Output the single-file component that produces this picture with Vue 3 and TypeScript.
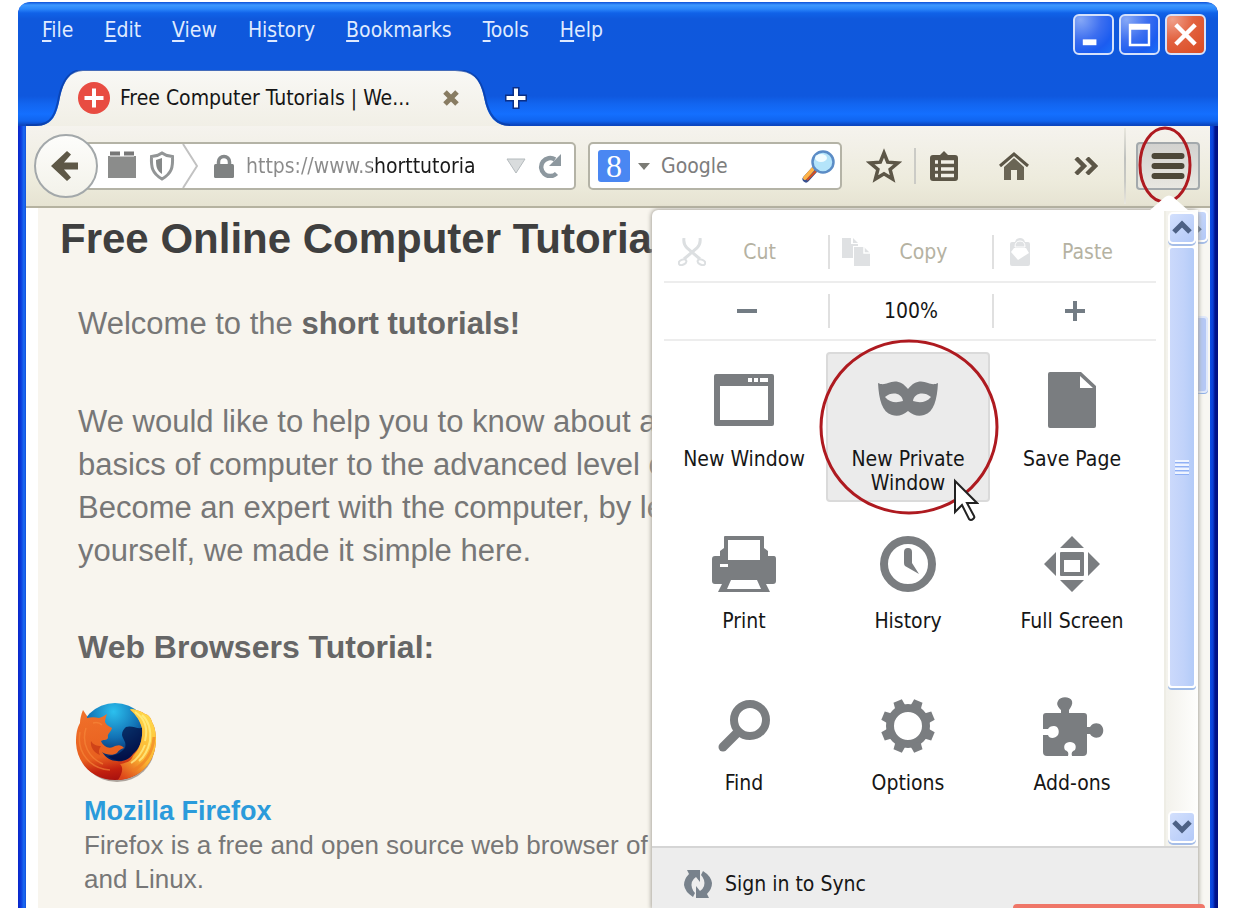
<script setup lang="ts">
import { ref } from 'vue'

interface MenuEntry {
  before: string
  key: string
  after: string
}

const menus: MenuEntry[] = [
  { before: '', key: 'F', after: 'ile' },
  { before: '', key: 'E', after: 'dit' },
  { before: '', key: 'V', after: 'iew' },
  { before: 'Hi', key: 's', after: 'tory' },
  { before: '', key: 'B', after: 'ookmarks' },
  { before: '', key: 'T', after: 'ools' },
  { before: '', key: 'H', after: 'elp' },
]

const teeth: number[] = [22.5, 67.5, 112.5, 157.5, 202.5, 247.5, 292.5, 337.5]

const address = ref('https://www.shorttutoria')
const query = ref('')
</script>

<template>
  <div class="window">
    <header class="titlebar">
      <div class="menu-row">
        <nav class="menus">
          <button v-for="m in menus" :key="m.key + m.after" class="menu" type="button">{{ m.before }}<u>{{ m.key }}</u>{{ m.after }}</button>
        </nav>
        <div class="controls">
          <button class="control" type="button" aria-label="Minimize">
            <svg viewBox="0 0 38 38"><rect x="8" y="24" width="14" height="6" fill="#fff" /></svg>
          </button>
          <button class="control" type="button" aria-label="Maximize">
            <svg viewBox="0 0 38 38"><path d="M8 8h22v23H8zM10.500 14v14.500h17V14z" fill="#fff" fill-rule="evenodd" /></svg>
          </button>
          <button class="control close" type="button" aria-label="Close">
            <svg viewBox="0 0 38 38"><path d="M9 9l20 20M29 9L9 29" stroke="#fff" stroke-width="4.500" /></svg>
          </button>
        </div>
      </div>
      <div class="tab-row">
        <div class="tab">
          <svg class="tab-shape" viewBox="0 0 484 56" preserveAspectRatio="none">
            <defs>
              <linearGradient id="tabFill" x1="0" y1="0" x2="0" y2="1">
                <stop offset="0" stop-color="#f9f8f5" />
                <stop offset="1" stop-color="#f1efe6" />
              </linearGradient>
            </defs>
            <path d="M0 56H10C27 56 31 44 34 27C38 8 46 0 58 0H428C446 0 454 8 458 27C461 44 468 56 484 56Z" fill="url(#tabFill)" />
            <path d="M0 55H10C26 55 30 43 33 27C37 8 45 0 57 0H429C447 0 455 8 459 27C462 43 469 55 484 55" fill="none" stroke="#0a3da6" stroke-width="2" opacity=".75" />
          </svg>
          <svg class="favicon" viewBox="0 0 32 32">
            <circle cx="16" cy="16" r="16" fill="#e84c42" />
            <path d="M16 6.500v19M6.500 16h19" stroke="#fff" stroke-width="4" />
          </svg>
          <span class="tab-title">Free Computer Tutorials | We...</span>
          <button class="plain" type="button" aria-label="Close tab">
            <svg width="18" height="18" viewBox="0 0 18 18"><path d="M3 3l12 12M15 3L3 15" stroke="#887c62" stroke-width="5" /></svg>
          </button>
        </div>
        <button class="plain new-tab" type="button" aria-label="New tab">
          <svg width="26" height="26" viewBox="0 0 26 26">
            <path d="M13 2v22M2 13h22" stroke="#0b2f86" stroke-width="7" />
            <path d="M13 3.500v19M3.500 13h19" stroke="#fff" stroke-width="4" />
          </svg>
        </button>
      </div>
    </header>

    <div class="toolbar">
      <button class="back" type="button" aria-label="Back">
        <svg width="30" height="32" viewBox="0 0 30 32"><path d="M17 1l4 3.500-7 8h14v7H14l7 8-4 3.500L1 16z" fill="#5e5847" /></svg>
      </button>
      <div class="address">
        <svg class="ident" width="92" height="44" viewBox="0 0 92 44">
          <path d="M2 12h28v22H2z" fill="#8b8c8b" />
          <path d="M4 9.500h10M18 9.500h10" stroke="#777" stroke-width="4" />
          <path d="M4 12.500h24" stroke="#fff" stroke-width="1" opacity=".5" />
          <path d="M56 9c4 3 7 3 10.500 3.500C67 23 66 29 56 35C46 29 45 23 45.500 12.500C49 12 52 12 56 9z" fill="none" stroke="#929596" stroke-width="3" />
          <path d="M56 14v16c-5-3-6-7-6-14z" fill="#858888" />
          <path d="M77 0l14 22-14 22" fill="none" stroke="#c2c2c2" stroke-width="2" />
        </svg>
        <svg class="lock" width="20" height="24" viewBox="0 0 20 24">
          <path d="M4.500 12V8a5.500 5.500 0 0 1 11 0v4" fill="none" stroke="#85898a" stroke-width="3.500" />
          <rect y="10" width="20" height="14" rx="1.500" fill="#7f8282" />
        </svg>
        <input v-model="address" class="url" type="text" aria-label="Address" />
        <svg width="20" height="16" viewBox="0 0 20 16"><path d="M1 1h18L10 15z" fill="#d9dcdd" stroke="#b4babd" /></svg>
        <button class="plain reload" type="button" aria-label="Reload">
          <svg width="24" height="24" viewBox="0 0 24 24">
            <path d="M18.500 19.500A9 9 0 1 1 17 5.500" fill="none" stroke="#8d989f" stroke-width="4.500" />
            <path d="M23 0v12H11z" fill="#8d989f" />
          </svg>
        </button>
      </div>
      <div class="search">
        <span class="engine">8</span>
        <svg width="12" height="7" viewBox="0 0 12 7"><path d="M0 0h12L6 7z" fill="#7b7b75" /></svg>
        <input v-model="query" class="query" type="text" placeholder="Google" aria-label="Search" />
        <button class="plain" type="button" aria-label="Search now">
          <svg width="34" height="34" viewBox="0 0 34 34">
            <path d="M14 19L4 30" stroke="#38508f" stroke-width="7" stroke-linecap="round" />
            <path d="M11 20L3 29" stroke="#ffb347" stroke-width="4" stroke-linecap="round" />
            <path d="M14 22L5 31" stroke="#d8511f" stroke-width="2" />
            <circle cx="21" cy="13" r="10.500" fill="#b4e4fa" stroke="#5b8cc6" stroke-width="2.500" />
            <ellipse cx="19" cy="9" rx="6" ry="4" fill="#f1fcff" />
          </svg>
        </button>
      </div>
      <button class="plain tool star" type="button" aria-label="Bookmark">
        <svg width="36" height="36" viewBox="0 0 36 36"><path d="M18 5l3.700 9.200 10 .8-7.600 6.400 2.500 9.600-8.600-5.300L9.400 31l2.500-9.600L4.300 15l10-.8z" fill="none" stroke="#5c5647" stroke-width="3.500" /></svg>
      </button>
      <span class="tool-sep"></span>
      <button class="plain tool list" type="button" aria-label="Bookmarks list">
        <svg width="28" height="30" viewBox="0 0 28 30">
          <path d="M3 4h7l4-4 4 4h7q3 0 3 3v20q0 3-3 3H3q-3 0-3-3V7q0-3 3-3z" fill="#5c5647" />
          <path d="M5 11h3M5 18h3M5 24.500h3M11 11h13M11 18h13M11 24.500h13" stroke="#f2f0e7" stroke-width="3.500" />
        </svg>
      </button>
      <button class="plain tool" type="button" aria-label="Home">
        <svg width="30" height="28" viewBox="0 0 30 28">
          <path d="M1 14L15 2l14 12" fill="none" stroke="#5c5647" stroke-width="3" />
          <path d="M5 15l10-9 10 9v13h-7V18h-6v10H5z" fill="#6a6555" />
        </svg>
      </button>
      <button class="plain tool" type="button" aria-label="More tools">
        <svg width="24" height="18" viewBox="0 0 24 18"><path d="M2 1l8 8-8 8M13 1l8 8-8 8" fill="none" stroke="#5c5647" stroke-width="4.500" /></svg>
      </button>
      <span class="end-sep"></span>
      <button class="burger" type="button" aria-label="Open menu">
        <svg width="34" height="28" viewBox="0 0 34 28"><path d="M3.500 4h27M3.500 14h27M3.500 24h27" stroke="#4d4839" stroke-width="6" stroke-linecap="round" /></svg>
        <svg class="ring small" viewBox="0 0 54 78"><ellipse cx="27" cy="39" rx="25" ry="37" fill="none" stroke="#ae1a20" stroke-width="3" /></svg>
      </button>
    </div>

    <div class="body">
      <main class="page">
        <h1>Free Online Computer Tutoria</h1>
        <p class="lead">Welcome to the <b>short tutorials!</b></p>
        <p class="lead">We would like to help you to know about a<br />basics of computer to the advanced level o<br />Become an expert with the computer, by le<br />yourself, we made it simple here.</p>
        <h2>Web Browsers Tutorial:</h2>
        <svg class="fox" viewBox="0 0 80 80">
          <defs>
            <radialGradient id="globe" cx=".48" cy=".12" r=".72">
              <stop offset="0" stop-color="#2cc0ee" />
              <stop offset=".5" stop-color="#1272b5" />
              <stop offset="1" stop-color="#03104e" />
            </radialGradient>
            <linearGradient id="fur" x1=".3" y1="0" x2=".5" y2="1">
              <stop offset="0" stop-color="#f0702a" />
              <stop offset=".65" stop-color="#e8601f" />
              <stop offset=".85" stop-color="#c2200f" />
              <stop offset="1" stop-color="#a8110f" />
            </linearGradient>
            <linearGradient id="tail" x1=".6" y1="0" x2=".2" y2="1">
              <stop offset="0" stop-color="#ffd84a" />
              <stop offset=".6" stop-color="#fbb431" />
              <stop offset="1" stop-color="#dd451a" />
            </linearGradient>
          </defs>
          <ellipse cx="41" cy="42" rx="38" ry="37" fill="#3b2a22" opacity=".4" />
          <circle cx="39" cy="36" r="36" fill="url(#globe)" />
          <path d="M50 24c6-2 10 2 16 1c1 14-4 24-14 31c-8 3-16 1-20-3c6 0 12-2 17-8c2-6-2-8-3-13c0-4 2-6 4-8z" fill="#020a3e" opacity=".7" />
          <path d="M11 13L7 7C5 12 4 16 4 20C1 25 0 31 0 40C1 61 17 77 39 77C62 77 79 61 80 38C80 30 79 24 76 19C75 15 73 12 69 11C65 8 59 6 54 7C58 10 63 14 66 25C67 36 64 46 57 51C53 57 46 59 41 58C35 58 30 55 26 49C30 52 37 53 41 50C43 47 45 46 48 45C45 41 41 42 37 44C32 46 27 43 25 38C28 36 32 38 32 34C31 31 35 29 36 25C33 23 30 22 29 19C29 16 30 14 31 11C28 13 26 14 23 15C19 14 15 14 11 15Z" fill="url(#fur)" />
          <path d="M54 6C57 10 63 14 66 25C67 36 64 46 57 53C55 59 49 60 44 61C48 65 46 71 42 77C63 76 79 61 80 38C80 30 79 24 76 19C75 15 73 12 69 11C65 8 59 6 54 6Z" fill="url(#tail)" />
          <path d="M66 12c8 7 9 17 8 26c-2 9-6 16-11 20M59 9c11 7 13 17 10 29M69 42c-4 10-9 15-14 18" fill="none" stroke="#fff08a" stroke-width="2" opacity=".75" />
          <path d="M78 34c-1 16-10 28-22 34" fill="none" stroke="#ef7a22" stroke-width="3" opacity=".6" />
          <path d="M15 38c2 4 6 5 10 5c-2 3-3 6-1 9c-6-2-10-8-9-14z" fill="#bd2d12" opacity=".6" />
          <path d="M4 29c-4 22 12 37 30 38M10 25c-5 16 3 30 17 36M17 20c4-1 7 0 9 2" fill="none" stroke="#f78b3c" stroke-width="1.500" opacity=".6" />
        </svg>
        <div class="entry">
          <a href="#">Mozilla Firefox</a>
          <p>Firefox is a free and open source web browser of<br />and Linux.</p>
        </div>
      </main>
      <div class="page-scroll">
        <span class="scroll-btn">
          <svg width="24" height="16" viewBox="0 0 24 16"><path d="M3 13l9-9 9 9" fill="none" stroke="#4d6185" stroke-width="5" /></svg>
        </span>
        <span class="page-thumb"></span>
      </div>

      <section class="popup">
        <svg class="arrow" viewBox="0 0 40 16"><path d="M0 16L16 2q4-3 8 0l16 14z" fill="#fff" /></svg>
        <div class="popup-main">
          <div class="grid">
            <div class="row edit">
              <button class="cell" type="button">
                <svg width="28" height="28" viewBox="0 0 28 28">
                  <path d="M6 0q-1 6 3 10l13 11M22 0q1 6-3 10L6 21" fill="none" stroke="#dcdfe1" stroke-width="3" />
                  <ellipse cx="4.500" cy="24" rx="4" ry="2.500" fill="none" stroke="#dcdfe1" stroke-width="2" transform="rotate(-25 5 24)" />
                  <ellipse cx="23.500" cy="24" rx="4" ry="2.500" fill="none" stroke="#dcdfe1" stroke-width="2" transform="rotate(25 23 24)" />
                </svg>
                <span>Cut</span>
              </button>
              <button class="cell" type="button">
                <svg width="28" height="28" viewBox="0 0 28 28">
                  <path d="M0 0h9v6h7v2h-5v12H0zM11 0l5 5h-5z" fill="#dfe1e3" />
                  <path d="M12 9h10l6 6v13H12z" fill="#dfe1e3" />
                  <path d="M22 9v6h6" fill="none" stroke="#fff" stroke-width="1.500" />
                </svg>
                <span>Copy</span>
              </button>
              <button class="cell" type="button">
                <svg width="28" height="28" viewBox="0 0 28 28">
                  <path d="M6 4h3q1-4 5-4t5 4h3q2 0 2 2v20q0 2-2 2H6q-2 0-2-2V6q0-2 2-2z" fill="#dfe1e3" />
                  <path d="M9 9q0-6 5-6t5 6z" fill="none" stroke="#fff" stroke-width="1" />
                  <path d="M5 14l3-4h12l3 5-11 7z" fill="#fff" />
                </svg>
                <span>Paste</span>
              </button>
            </div>
            <div class="row zoom">
              <button class="cell" type="button" aria-label="Zoom out">
                <svg width="20" height="20" viewBox="0 0 20 20"><path d="M0 10h20" stroke="#737c84" stroke-width="4" /></svg>
              </button>
              <button class="cell" type="button">100%</button>
              <button class="cell" type="button" aria-label="Zoom in">
                <svg width="20" height="20" viewBox="0 0 20 20"><path d="M0 10h20M10 0v20" stroke="#737c84" stroke-width="4" /></svg>
              </button>
            </div>
            <div class="tiles">
              <button class="tile" type="button">
                <svg width="64" height="64" viewBox="0 0 64 64">
                  <path d="M4 4h56q2 0 2 2v48q0 2-2 2H4q-2 0-2-2V6q0-2 2-2zM8 16v34h48V16zM36 8v4h4V8zM42 8v4h4V8zM48 8v4h8V8z" fill="#7a7d80" fill-rule="evenodd" />
                </svg>
                <span>New Window</span>
              </button>
              <button class="tile active" type="button">
                <svg width="64" height="64" viewBox="0 0 64 64">
                  <path d="M2 13c4 2 7 1 10 0c7-3 14-2 20 6c6-8 13-9 20-6c3 1 6 2 10 0c-1 17-4 29-14 32c-6 2-11 0-16-4c-5 4-10 6-16 4C6 42 3 30 2 13zM9 27c5 6 12 6 18 4c-1-8-11-10-18-4zM55 27c-7-6-17-4-18 4c6 2 13 2 18-4z" fill="#7a7d80" fill-rule="evenodd" />
                </svg>
                <span>New Private Window</span>
                <svg class="ring large" viewBox="0 0 182 178"><ellipse cx="91" cy="89" rx="88" ry="86" fill="none" stroke="#ae1a20" stroke-width="3" /></svg>
                <svg class="pointer" viewBox="0 0 26 44"><path d="M2 3v31l7-7 7 14q2 2 4 0 2-1 1-3l-7-13h10z" fill="#fff" stroke="#222" stroke-width="2" /></svg>
              </button>
              <button class="tile" type="button">
                <svg width="64" height="64" viewBox="0 0 64 64">
                  <path d="M10 2h31l15 14v40q0 2-2 2H10q-2 0-2-2V4q0-2 2-2zM40 6v12h13z" fill="#7a7d80" fill-rule="evenodd" />
                </svg>
                <span>Save Page</span>
              </button>
              <button class="tile" type="button">
                <svg width="64" height="64" viewBox="0 0 64 64">
                  <path d="M13 4h38q1 0 1 1v11l4 3v5h6q2 0 2 3v22q0 3-3 3h-7l4 8H6l4-8H3q-3 0-3-3V27q0-3 3-3h5v-5l4-3V5q0-1 1-1zM16 8v20h32V8zM8 32v3h8v-3zM19 48l-4 9h34l-4-9z" fill="#7a7d80" fill-rule="evenodd" />
                </svg>
                <span>Print</span>
              </button>
              <button class="tile" type="button">
                <svg width="64" height="64" viewBox="0 0 64 64">
                  <circle cx="32" cy="32" r="24" fill="none" stroke="#7a7d80" stroke-width="8" />
                  <path d="M28 20q0-4 4-4t4 4v11l7 11-14-8q-1-1-1-3z" fill="#7a7d80" />
                </svg>
                <span>History</span>
              </button>
              <button class="tile" type="button">
                <svg width="64" height="64" viewBox="0 0 64 64">
                  <path d="M32 4l12 12H20zM32 60l12-12H20zM4 32l12-12v24zM60 32L48 20v24z" fill="#7a7d80" />
                  <path d="M21 20h22q1 0 1 1v22q0 1-1 1H21q-1 0-1-1V21q0-1 1-1zM24 28v12h16V28z" fill="#7a7d80" fill-rule="evenodd" />
                </svg>
                <span>Full Screen</span>
              </button>
              <button class="tile" type="button">
                <svg width="64" height="64" viewBox="0 0 64 64">
                  <circle cx="38" cy="26" r="16" fill="none" stroke="#7a7d80" stroke-width="8" />
                  <path d="M26 38L11 53" stroke="#7a7d80" stroke-width="9" stroke-linecap="round" />
                </svg>
                <span>Find</span>
              </button>
              <button class="tile" type="button">
                <svg width="64" height="64" viewBox="0 0 64 64">
                  <circle cx="32" cy="32" r="18" fill="none" stroke="#7a7d80" stroke-width="8" />
                  <path v-for="a in teeth" :key="a" d="M26.500 13l1-8h9l1 8z" fill="#7a7d80" :transform="`rotate(${a} 32 32)`" />
                </svg>
                <span>Options</span>
              </button>
              <button class="tile" type="button">
                <svg width="64" height="64" viewBox="0 0 64 64">
                  <path transform="translate(-1 3)" d="M22 13c-3-3-5-6-3-9c2-5 12-5 14 0c1 3-1 6-3 9v3h15q3 0 3 3v11h3c3-5 9-4 11-2c3 3 3 8 0 11c-2 2-8 3-11-2h-3v18q0 4-4 4H33c-1-3 0-5 3-6c2-4 0-8-5-8s-7 4-5 8c3 1 4 3 3 6H8q-4 0-4-4V38h5c1 4 7 4 10 0c2-4 0-9-4-9c-3 0-5 1-6 3H4V19q0-3 3-3h15z" fill="#7a7d80" />
                </svg>
                <span>Add-ons</span>
              </button>
            </div>
          </div>
          <div class="menu-scroll">
            <span class="scroll-btn">
              <svg width="22" height="16" viewBox="0 0 22 16"><path d="M3 12l8-8 8 8" fill="none" stroke="#4d6185" stroke-width="5" /></svg>
            </span>
            <span class="menu-thumb"><i></i><i></i><i></i><i></i></span>
            <span class="scroll-btn">
              <svg width="22" height="16" viewBox="0 0 22 16"><path d="M3 3l8 8 8-8" fill="none" stroke="#4d6185" stroke-width="5" /></svg>
            </span>
          </div>
        </div>
        <button class="sync" type="button">
          <svg width="28" height="28" viewBox="0 0 28 28">
            <path d="M3 0h13v12l-4-5q-6 4-4 11 1 3 3 5l-2 4Q1 22 0 15 0 9 5 4z" fill="#78828c" />
            <path d="M25 28H12V16l4 5q6-4 4-11-1-3-3-5l2-4q8 5 9 12 0 6-5 11z" fill="#78828c" />
          </svg>
          <span>Sign in to Sync</span>
        </button>
      </section>
      <div class="notice"></div>
    </div>
  </div>
</template>

<style>
html,
body,
#app {
  height: 100%;
}
body {
  margin: 0;
  background: #fff;
}
</style>

<style scoped>
* {
  box-sizing: border-box;
}
.window {
  height: calc(100% - 2px);
  margin: 0 18px;
  position: relative;
  top: 2px;
  display: flex;
  flex-direction: column;
  overflow: hidden;
  border-radius: 12px 12px 0 0;
  padding: 0 8px;
  background:
    linear-gradient(90deg, #0a24c8 0, #0b3cdd 3px, #1c6cf2 6px, #1250dc 8px) left / 8px 100% no-repeat,
    linear-gradient(90deg, #0d50e4 0, #0a3fd6 3px, #001590 5px, #000f80 8px) right / 8px 100% no-repeat;
  font-family: "DejaVu Sans Condensed", "Noto Sans", sans-serif;
  font-size: 21px;
  color: #161616;
}
button {
  font: inherit;
  color: inherit;
  cursor: pointer;
}
svg {
  display: block;
  flex: none;
}
.plain {
  border: 0;
  padding: 0;
  background: none;
  display: flex;
  align-items: center;
  justify-content: center;
}
.titlebar {
  flex: none;
  height: 124px;
  margin: 0 -8px;
  padding: 0 8px;
  display: flex;
  flex-direction: column;
  justify-content: space-between;
  background: linear-gradient(180deg, #0c50d8 0, #3c98ff 3px, #2a86fa 7px, #1062e8 11px, #0f58dc 17px, #0f58de 94px, #1265f0 102px, #146fff 112px, #1064ee 119px, #0b46c0 123px);
}
.menu-row {
  height: 56px;
  padding: 0 4px 0 16px;
  display: flex;
  align-items: center;
  justify-content: space-between;
}
.menus {
  display: flex;
  gap: 31px;
}
.menu {
  border: 0;
  padding: 0;
  background: none;
  color: #dfeaff;
}
.menu u {
  text-underline-offset: 3px;
  text-decoration-thickness: 2px;
}
.controls {
  display: flex;
  gap: 5px;
  padding-top: 8px;
}
.control {
  width: 41px;
  height: 41px;
  padding: 0;
  border: 2px solid #d5e1fb;
  border-radius: 6px;
  background: radial-gradient(circle at 15% 10%, #86a8f6 0, #3d6ff0 45%, #1b5cf0 75%, #1a6ef8 100%);
}
.control.close {
  background: radial-gradient(circle at 15% 10%, #f0a08a 0, #e2623f 45%, #d94a22 100%);
}
.tab-row {
  height: 56px;
  display: flex;
}
.tab {
  position: relative;
  width: 484px;
  padding: 0 50px 0 52px;
  display: flex;
  align-items: center;
}
.tab-shape {
  position: absolute;
  inset: 0;
  width: 100%;
  height: 100%;
}
.favicon {
  position: relative;
  width: 32px;
  height: 32px;
  margin-right: 10px;
}
.tab-title {
  position: relative;
  flex: 1;
  white-space: nowrap;
}
.tab .plain {
  position: relative;
}
.new-tab {
  margin-left: -7px;
}
.toolbar {
  flex: none;
  height: 82px;
  padding: 0 10px 0 8px;
  display: flex;
  align-items: center;
  background: linear-gradient(180deg, #f5f3ee, #edebdc 70%, #e6e3d2);
  border-bottom: 2px solid #b5b2a0;
}
.back {
  position: relative;
  z-index: 1;
  width: 64px;
  height: 64px;
  padding: 0 2px 0 0;
  border: 2px solid #a3a8aa;
  border-radius: 50%;
  background: linear-gradient(#fdfdfb, #f3f2ea);
  display: flex;
  align-items: center;
  justify-content: center;
}
.address,
.search {
  height: 48px;
  border: 2px solid #b4b3a6;
  border-radius: 5px;
  background: #fff;
  display: flex;
  align-items: center;
}
.address {
  flex: 1;
  min-width: 0;
  margin-left: -14px;
  padding: 0 12px 0 20px;
}
.lock {
  margin: 0 12px 0 16px;
}
input {
  min-width: 0;
  border: 0;
  padding: 0;
  outline: 0;
  font: inherit;
}
.url {
  flex: 1;
  height: 44px;
  color: transparent;
  background: linear-gradient(90deg, #8a8a8a 126px, #1a1a1a 126px);
  background-clip: text;
  -webkit-background-clip: text;
}
.reload {
  margin-left: 12px;
}
.search {
  width: 254px;
  margin-left: 12px;
  padding: 0 4px 0 8px;
}
.engine {
  width: 32px;
  height: 32px;
  margin-right: 8px;
  border-radius: 3px;
  background: #4a87f2;
  color: #fff;
  font: 32px/32px "Liberation Serif", serif;
  text-align: center;
}
.query {
  flex: 1;
  margin-left: 11px;
}
.query::placeholder {
  color: #7d7d7d;
  opacity: 1;
}
.tool {
  width: 60px;
  height: 48px;
  margin-left: 12px;
}
.tool.list {
  width: 56px;
  margin-left: 0;
}
.tool-sep {
  width: 2px;
  height: 36px;
  background: #cbcbc6;
}
.end-sep {
  width: 2px;
  height: 76px;
  margin-left: 8px;
  background: linear-gradient(#e9e7de, #bfc1be 40%, #c8c9c4 70%, #e9e7de);
}
.burger {
  position: relative;
  width: 64px;
  height: 48px;
  margin-left: 10px;
  padding: 0;
  border: 2px solid #a3a9ac;
  border-radius: 4px;
  background: linear-gradient(#d2d2cf, #e8e7e1);
  display: flex;
  align-items: center;
  justify-content: center;
}
.ring {
  position: absolute;
  pointer-events: none;
}
.ring.small {
  width: 54px;
  height: 78px;
  left: 0;
  top: -18px;
}
.body {
  position: relative;
  flex: 1;
  min-height: 0;
  display: flex;
  background: #fff;
}
.page {
  flex: 1;
  min-width: 0;
  margin-left: 12px;
  padding: 7px 0 0 40px;
  overflow: hidden;
  white-space: nowrap;
  background: #f8f5ee;
  font-family: "Liberation Sans", Arial, sans-serif;
  color: #777;
}
h1 {
  margin: 0 0 0 -18px;
  font-size: 42px;
  line-height: 48px;
  color: #3f3f3f;
}
.lead {
  margin: 0;
  padding-top: 39px;
  font-size: 31px;
  line-height: 43px;
}
.lead + .lead {
  padding-top: 55px;
}
.lead b {
  color: #666;
}
h2 {
  margin: 56px 0 0;
  font-size: 32px;
  line-height: 38px;
  color: #666;
}
.fox {
  width: 80px;
  height: 80px;
  margin: 37px 0 0 -2px;
}
.entry {
  padding: 11px 0 0 6px;
  font-size: 26px;
  line-height: 34px;
}
.entry a {
  display: block;
  font-weight: bold;
  font-size: 27px;
  color: #2b9bdb;
  text-decoration: none;
}
.entry p {
  margin: 0;
}
.page-scroll {
  width: 36px;
  padding: 2px 2px 0 0;
  background: #f8f7f2;
}
.scroll-btn {
  flex: none;
  height: 32px;
  display: flex;
  align-items: center;
  justify-content: center;
  border: 2px solid #fff;
  border-radius: 5px;
  background: linear-gradient(135deg, #d3e0fd, #b3c9f8);
  box-shadow: 0 2px 0 #a5bde8;
}
.page-thumb {
  display: block;
  height: 77px;
  margin-top: 74px;
  border: 2px solid #dfe8fb;
  border-radius: 4px;
  background: #b5c8f5;
  box-shadow: 0 1px 0 #8fb0e6;
}
.popup {
  position: absolute;
  top: 2px;
  right: 12px;
  bottom: 0;
  width: 546px;
  display: flex;
  flex-direction: column;
  border-radius: 6px 6px 0 0;
  background: #fff;
  box-shadow: 0 0 4px 1px #a9a69d;
}
.arrow {
  position: absolute;
  right: 9px;
  top: -15px;
  width: 40px;
  height: 16px;
}
.popup-main {
  height: 636px;
  display: flex;
  padding-left: 12px;
}
.grid {
  flex: 1;
}
.row {
  display: grid;
  grid-template-columns: repeat(3, 1fr);
  margin-right: 8px;
  border-bottom: 2px solid #ededed;
  align-items: center;
}
.edit {
  height: 73px;
  padding-top: 12px;
  color: #b5b2a2;
}
.zoom {
  height: 58px;
}
.cell {
  height: 34px;
  border: 0;
  border-left: 2px solid #e0e0e0;
  padding: 0;
  background: none;
  display: flex;
  align-items: center;
  justify-content: center;
}
.cell:first-child {
  border-left-color: transparent;
}
.edit .cell {
  padding: 0 0 0 12px;
}
.edit .cell span {
  flex: 1;
  padding-right: 15px;
}
.tiles {
  display: grid;
  grid-template-columns: repeat(3, 164px);
  grid-auto-rows: 150px;
  row-gap: 12px;
  margin: 11px 0 0 -2px;
}
.tile {
  position: relative;
  border: 2px solid transparent;
  border-radius: 4px;
  padding: 16px 20px 0;
  background: none;
  display: flex;
  flex-direction: column;
  align-items: center;
  line-height: 24px;
}
.tile > span {
  margin-top: 13px;
  white-space: nowrap;
}
.tile.active > span {
  white-space: normal;
}
.tile.active {
  border-color: #dadada;
  background: #ebebeb;
}
.ring.large {
  width: 182px;
  height: 178px;
  left: -10px;
  top: -16px;
}
.pointer {
  position: absolute;
  z-index: 1;
  left: 125px;
  top: 124px;
  width: 26px;
  height: 44px;
}
.menu-scroll {
  width: 34px;
  display: flex;
  flex-direction: column;
  padding: 2px 2px 3px;
  border-left: 2px solid #eeede5;
  background: linear-gradient(90deg, #f3f2ec, #fefefd);
}
.menu-thumb {
  height: 442px;
  margin: 2px 0 auto;
  border: 2px solid #fff;
  border-radius: 4px;
  background: linear-gradient(90deg, #cbd9fb, #c0d2fa 60%, #b3cbf8);
  box-shadow: 0 2px 0 #a0bce8;
  display: flex;
  flex-direction: column;
  align-items: center;
  justify-content: center;
  gap: 2px;
}
.menu-thumb i {
  width: 14px;
  height: 2px;
  background: #eef4ff;
  box-shadow: 0 1px 0 #8fb0f5;
}
.sync {
  flex: 1;
  border: 0;
  border-top: 2px solid #d5d5d5;
  padding: 12px 32px 0;
  background: #ededed;
  display: flex;
  gap: 13px;
  align-items: center;
}
.notice {
  position: absolute;
  right: 5px;
  bottom: 0;
  width: 192px;
  height: 4px;
  border-radius: 6px 6px 0 0;
  background: #ef7668;
}
</style>
